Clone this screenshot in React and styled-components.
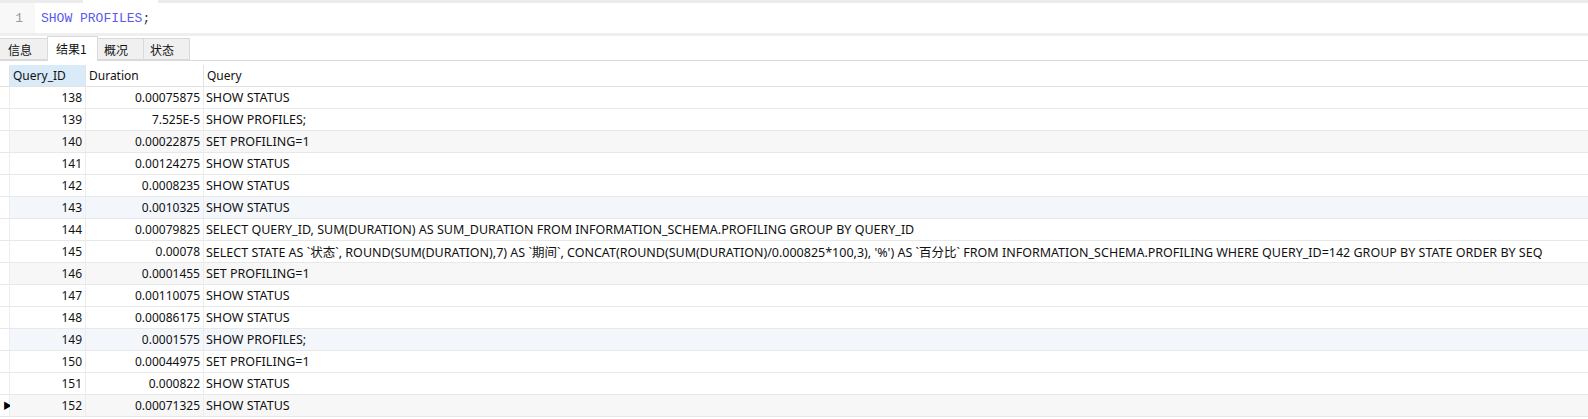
import React from "react";
import styled, { createGlobalStyle } from "styled-components";

const Global = createGlobalStyle`
  html, body { margin: 0; padding: 0; background: #fff; }
  body { font-family: "Noto Sans", "Noto Sans CJK SC", sans-serif; }
`;

const Page = styled.div`
  width: 1588px;
  height: 419px;
  overflow: hidden;
  display: flex;
  flex-direction: column;
  background: #fff;
`;

const TopStrip = styled.div`
  height: 3px;
  display: flex;
  flex: none;
`;

const StripPart = styled.div`
  height: 100%;
  width: ${(p) => (p.$w ? `${p.$w}px` : "auto")};
  flex: ${(p) => (p.$w ? "none" : "1")};
  background: ${(p) => (p.$white ? "#fff" : "#ececec")};
`;

const Editor = styled.div`
  height: 30px;
  display: flex;
  flex: none;
  align-items: stretch;
`;

const Gutter = styled.div`
  width: 35px;
  background: #f8f8f8;
  color: #999;
  font-family: "Liberation Mono", monospace;
  font-size: 13px;
  display: flex;
  align-items: center;
  justify-content: flex-end;
  padding-right: 12px;
  box-sizing: border-box;
`;

const Code = styled.div`
  padding-left: 6px;
  font-family: "Liberation Mono", monospace;
  font-size: 13px;
  display: flex;
  align-items: center;
  color: #333;
`;

const Keyword = styled.span`
  color: #5a5af0;
`;

const Separator = styled.div`
  height: 3px;
  background: #efefef;
  flex: none;
`;

const TabBar = styled.div`
  height: 25px;
  display: flex;
  align-items: flex-end;
  border-bottom: 1px solid #d9d9d9;
  flex: none;
  box-sizing: border-box;
`;

const Tab = styled.div`
  box-sizing: border-box;
  height: ${(p) => (p.$active ? "25px" : "22px")};
  margin-bottom: ${(p) => (p.$active ? "-1px" : "0")};
  width: ${(p) => p.$w}px;
  background: ${(p) => (p.$active ? "#fff" : "#f0f0f0")};
  border: 1px solid #d9d9d9;
  border-bottom: ${(p) => (p.$active ? "none" : "1px solid #d9d9d9")};
  border-left: ${(p) => (p.$first ? "none" : "1px solid #d9d9d9")};
  margin-left: -1px;
  font-size: 12px;
  color: #111;
  display: flex;
  align-items: center;
  padding-left: ${(p) => (p.$first ? 8 : p.$active ? 8 : 6)}px;
  padding-bottom: ${(p) => (p.$active ? 2 : 0)}px;
  font-family: "Noto Sans CJK SC", "Noto Sans", sans-serif;
  &:first-child { margin-left: 0; }
`;

const Grid = styled.div`
  margin-top: 4px;
  display: grid;
  grid-template-columns: 10px 76px 118px 1fr;
  font-size: 12px;
  color: #111;
  font-family: "Noto Sans", "Noto Sans CJK SC", sans-serif;
`;

const HeadCell = styled.div`
  height: 22px;
  box-sizing: border-box;
  border-bottom: 1px solid #e3e3e3;
  border-right: ${(p) => (p.$noline ? "none" : "1px solid #e3e3e3")};
  background: ${(p) => (p.$sel ? "#d9eaf9" : "#fff")};
  display: flex;
  align-items: center;
  padding-left: 3px;
  white-space: nowrap;
`;

const Cell = styled.div`
  height: 22px;
  box-sizing: border-box;
  border-bottom: 1px solid #e8e8e8;
  border-right: ${(p) => (p.$noline ? "none" : "1px solid #ececec")};
  background: ${(p) => p.$bg || "#fff"};
  display: flex;
  align-items: center;
  justify-content: ${(p) => (p.$right ? "flex-end" : "flex-start")};
  padding: ${(p) => (p.$right ? "0 3px 0 0" : "0 0 0 2px")};
  font-size: ${(p) => (p.$text ? "12.5px" : "12px")};
  white-space: nowrap;
`;

const Indicator = styled.span`
  font-size: 9px;
  color: #000;
  margin-left: 1px;
`;

const rows = [
  [138, "0.00075875", "SHOW STATUS"],
  [139, "7.525E-5", "SHOW PROFILES;"],
  [140, "0.00022875", "SET PROFILING=1"],
  [141, "0.00124275", "SHOW STATUS"],
  [142, "0.0008235", "SHOW STATUS"],
  [143, "0.0010325", "SHOW STATUS"],
  [144, "0.00079825", "SELECT QUERY_ID, SUM(DURATION) AS SUM_DURATION FROM INFORMATION_SCHEMA.PROFILING GROUP BY QUERY_ID"],
  [145, "0.00078", "SELECT STATE AS `状态`, ROUND(SUM(DURATION),7) AS `期间`, CONCAT(ROUND(SUM(DURATION)/0.000825*100,3), '%') AS `百分比` FROM INFORMATION_SCHEMA.PROFILING WHERE QUERY_ID=142 GROUP BY STATE ORDER BY SEQ"],
  [146, "0.0001455", "SET PROFILING=1"],
  [147, "0.00110075", "SHOW STATUS"],
  [148, "0.00086175", "SHOW STATUS"],
  [149, "0.0001575", "SHOW PROFILES;"],
  [150, "0.00044975", "SET PROFILING=1"],
  [151, "0.000822", "SHOW STATUS"],
  [152, "0.00071325", "SHOW STATUS"],
];

function rowBg(i) {
  if (i % 3 !== 2) return "#fff";
  return Math.floor(i / 3) % 2 === 0 ? "#f7f7f7" : "#f3f7fc";
}

export default function App() {
  return (
    <Page>
      <Global />
      <TopStrip>
        <StripPart $w={83} />
        <StripPart $w={75} $white />
        <StripPart />
      </TopStrip>
      <Editor>
        <Gutter>1</Gutter>
        <Code>
          <Keyword>SHOW PROFILES</Keyword>;
        </Code>
      </Editor>
      <Separator />
      <TabBar>
        <Tab $w={48} $first>信息</Tab>
        <Tab $w={51} $active>结果1</Tab>
        <Tab $w={47}>概况</Tab>
        <Tab $w={47}>状态</Tab>
      </TabBar>
      <Grid>
        <HeadCell />
        <HeadCell $sel>Query_ID</HeadCell>
        <HeadCell>Duration</HeadCell>
        <HeadCell $noline>Query</HeadCell>
        {rows.map(([id, dur, q], i) => {
          const bg = rowBg(i);
          const last = i === rows.length - 1;
          return (
            <React.Fragment key={id}>
              <Cell $bg="#fff">{last ? <Indicator>▶</Indicator> : null}</Cell>
              <Cell $right $bg={bg}>{id}</Cell>
              <Cell $right $bg={bg}>{dur}</Cell>
              <Cell $noline $text $bg={bg}>{q}</Cell>
            </React.Fragment>
          );
        })}
      </Grid>
    </Page>
  );
}
